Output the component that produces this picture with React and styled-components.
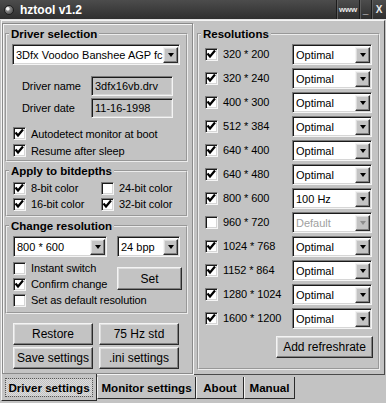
import React from 'react';
import styled, { createGlobalStyle } from 'styled-components';

const FONT = '"Liberation Sans", Arial, Helvetica, sans-serif';

const GlobalStyle = createGlobalStyle`
  html, body {
    margin: 0;
    padding: 0;
    background: #c3c3c3;
    font-family: ${FONT};
  }
`;

const RESOLUTIONS = [
  { label: '320 * 200', on: true, rate: 'Optimal' },
  { label: '320 * 240', on: true, rate: 'Optimal' },
  { label: '400 * 300', on: true, rate: 'Optimal' },
  { label: '512 * 384', on: true, rate: 'Optimal' },
  { label: '640 * 400', on: true, rate: 'Optimal' },
  { label: '640 * 480', on: true, rate: 'Optimal' },
  { label: '800 * 600', on: true, rate: '100 Hz' },
  { label: '960 * 720', on: false, rate: 'Default', disabled: true },
  { label: '1024 * 768', on: true, rate: 'Optimal' },
  { label: '1152 * 864', on: true, rate: 'Optimal' },
  { label: '1280 * 1024', on: true, rate: 'Optimal' },
  { label: '1600 * 1200', on: true, rate: 'Optimal' },
];

const TABS = [
  { label: 'Driver settings', active: true, w: 96 },
  { label: 'Monitor settings', w: 99 },
  { label: 'About', w: 48 },
  { label: 'Manual', w: 51 },
];

export default function App() {
  return (
    <>
      <GlobalStyle />
      <Window>
        <TitleBar>
          <AppIcon />
          <Title>hztool v1.2</Title>
          <TitleButtons>
            <TitleButton $w={23} $small>www</TitleButton>
            <TitleButton $w={12}>_</TitleButton>
            <TitleButton $w={15}>X</TitleButton>
          </TitleButtons>
        </TitleBar>

        <TabPage>
          <LeftPane>
            <Group>
              <Legend>Driver selection</Legend>
              <Combo value="3Dfx Voodoo Banshee AGP fc" width={168} />
              <FieldRow $top={11}>
                <FieldLabel>Driver name</FieldLabel>
                <TextBox>3dfx16vb.drv</TextBox>
              </FieldRow>
              <FieldRow $top={2}>
                <FieldLabel>Driver date</FieldLabel>
                <TextBox>11-16-1998</TextBox>
              </FieldRow>
              <CheckList>
                <Check checked label="Autodetect monitor at boot" />
                <Check checked label="Resume after sleep" />
              </CheckList>
            </Group>

            <Group $bottom={3}>
              <Legend>Apply to bitdepths</Legend>
              <DepthGrid>
                <Check checked label="8-bit color" h={16} />
                <Check label="24-bit color" h={16} />
                <Check checked label="16-bit color" h={16} />
                <Check checked label="32-bit color" h={16} />
              </DepthGrid>
            </Group>

            <Group $bottom={4}>
              <Legend>Change resolution</Legend>
              <ComboRow>
                <Combo value="800 * 600" width={94} />
                <Combo value="24 bpp" width={63} />
              </ComboRow>
              <ModeGrid>
                <Check label="Instant switch" h={16} />
                <SetButton>Set</SetButton>
                <Check checked label="Confirm change" h={16} />
                <WideCell>
                  <Check label="Set as default resolution" h={16} />
                </WideCell>
              </ModeGrid>
            </Group>

            <ButtonGrid>
              <Button>Restore</Button>
              <Button>75 Hz std</Button>
              <Button>Save settings</Button>
              <Button>.ini settings</Button>
            </ButtonGrid>
          </LeftPane>

          <ResGroup>
            <Legend>Resolutions</Legend>
            {RESOLUTIONS.map((r) => (
              <ResRow key={r.label}>
                <Check checked={r.on} label={r.label} h={24} />
                <Combo value={r.rate} width={80} disabled={r.disabled} />
              </ResRow>
            ))}
            <RefreshButton>Add refreshrate</RefreshButton>
          </ResGroup>
        </TabPage>

        <TabBar>
          {TABS.map((t) => (
            <Tab key={t.label} $active={t.active} $w={t.w}>
              <TabText $active={t.active}>{t.label}</TabText>
            </Tab>
          ))}
        </TabBar>
      </Window>
    </>
  );
}

function Check({ checked, label, h = 17 }) {
  return (
    <CheckRow $h={h}>
      <CheckBox>
        {checked && (
          <svg width="11" height="11" viewBox="0 0 11 11">
            <polyline points="1.5,4.5 4,7.5 9,1.5" fill="none" stroke="#000" strokeWidth="2.2" />
          </svg>
        )}
      </CheckBox>
      <CheckLabel>{label}</CheckLabel>
    </CheckRow>
  );
}

function Combo({ value, width, disabled }) {
  return (
    <ComboBox $w={width}>
      <ComboText $disabled={disabled}>{value}</ComboText>
      <ComboArrow $disabled={disabled} />
    </ComboBox>
  );
}

const Window = styled.div`
  width: 386px;
  height: 403px;
  display: flex;
  flex-direction: column;
  background: #c3c3c3;
  overflow: hidden;
`;

const TitleBar = styled.div`
  height: 19px;
  border-bottom: 1px solid #e4e4e4;
  background: linear-gradient(#4c4c4c, #2f2f2f);
  display: flex;
  align-items: center;
  padding-left: 4px;
`;

const AppIcon = styled.div`
  width: 10px;
  height: 10px;
  border-radius: 50%;
  background: radial-gradient(circle at 35% 35%, #f4f4f4 0 18%, #8a8a8a 30%, #5a5a5a 70%);
  border: 1px solid #1e1e1e;
  box-sizing: border-box;
`;

const Title = styled.div`
  margin-left: 6px;
  color: #fff;
  font-weight: bold;
  font-size: 12px;
  flex: 1;
`;

const TitleButtons = styled.div`
  display: flex;
  height: 19px;
`;

const TitleButton = styled.div`
  width: ${(p) => p.$w}px;
  box-sizing: border-box;
  border-left: 1px solid #1c1c1c;
  box-shadow: inset 1px 0 0 #5e5e5e;
  color: #e8e8e8;
  font-weight: bold;
  font-size: ${(p) => (p.$small ? '8px' : '10px')};
  letter-spacing: ${(p) => (p.$small ? '-0.3px' : '0')};
  display: flex;
  align-items: center;
  justify-content: center;
`;

const TabPage = styled.div`
  margin: 0 1px;
  height: 355px;
  box-sizing: border-box;
  border: 1px solid;
  border-color: #f4f4f4 #4a4a4a #4a4a4a #f4f4f4;
  padding: 2px 4px 1px 0;
  display: flex;
  align-items: flex-start;
`;

const LeftPane = styled.div`
  width: 191px;
  height: 351px;
  box-sizing: border-box;
  border: 1px solid #8a8a8a;
  box-shadow: inset 1px 1px 0 #f4f4f4, 1px 1px 0 #f4f4f4;
  padding: 3px 4px 0 2px;
  display: flex;
  flex-direction: column;
  gap: 2px;
`;

const Group = styled.fieldset`
  margin: 0;
  min-width: 0;
  padding: 3px 5px ${(p) => p.$bottom ?? 1}px 5px;
  border: 2px groove #ececec;
  display: flex;
  flex-direction: column;
`;

const ResGroup = styled(Group)`
  width: 183px;
  box-sizing: border-box;
  margin: 4px 0 0 4px;
  padding: 1px 5px 10px 5px;
`;

const Legend = styled.legend`
  padding: 0 2px;
  margin-left: -3px;
  font-size: 11.5px;
  font-weight: bold;
  line-height: 14px;
  color: #000;
`;

const FieldRow = styled.div`
  margin-top: ${(p) => p.$top}px;
  display: flex;
  align-items: center;
  height: 20px;
`;

const FieldLabel = styled.div`
  width: 69px;
  padding-left: 10px;
  font-size: 11px;
  letter-spacing: -0.1px;
`;

const sunken = `
  box-sizing: border-box;
  border: 1px solid;
  border-color: #7a7a7a #f4f4f4 #f4f4f4 #7a7a7a;
  box-shadow: inset 1px 1px 0 #1a1a1a, inset -1px -1px 0 #d6d6d6;
`;

const raised = `
  box-sizing: border-box;
  border: 1px solid;
  border-color: #f4f4f4 #2a2a2a #2a2a2a #f4f4f4;
  box-shadow: inset -1px -1px 0 #808080, inset 1px 1px 0 #dedede;
`;

const TextBox = styled.div`
  ${sunken}
  width: 82px;
  height: 20px;
  background: #c3c3c3;
  font-size: 11px;
  line-height: 18px;
  padding-left: 3px;
`;

const CheckList = styled.div`
  margin-top: 7px;
  display: flex;
  flex-direction: column;
`;

const CheckRow = styled.div`
  height: ${(p) => p.$h}px;
  display: flex;
  align-items: center;
  gap: 5px;
  padding-left: 1px;
  min-width: 0;
`;

const CheckBox = styled.div`
  ${sunken}
  width: 13px;
  height: 13px;
  flex: none;
  background: #fff;
  display: flex;
  align-items: center;
  justify-content: center;
`;

const CheckLabel = styled.div`
  font-size: 11px;
  letter-spacing: -0.1px;
  white-space: nowrap;
  color: #000;
`;

const DepthGrid = styled.div`
  margin-top: -1px;
  display: grid;
  grid-template-columns: 88px 1fr;
`;

const ComboRow = styled.div`
  display: flex;
  gap: 10px;
  padding-left: 1px;
`;

const ComboBox = styled.div`
  ${sunken}
  width: ${(p) => p.$w}px;
  height: 21px;
  flex: none;
  background: #fff;
  display: flex;
  align-items: stretch;
  padding: 2px 1px 1px 2px;
`;

const ComboText = styled.div`
  flex: 1;
  min-width: 0;
  overflow: hidden;
  white-space: nowrap;
  font-size: 11px;
  line-height: 16px;
  padding-left: 1px;
  color: ${(p) => (p.$disabled ? '#a0a0a0' : '#000')};
`;

const ComboArrow = styled.div`
  ${raised}
  width: 15px;
  flex: none;
  background: #c3c3c3;
  display: flex;
  align-items: center;
  justify-content: center;

  &::after {
    content: '';
    border-left: 3.5px solid transparent;
    border-right: 3.5px solid transparent;
    border-top: 4px solid ${(p) => (p.$disabled ? '#8e8e8e' : '#000')};
  }
`;

const ModeGrid = styled.div`
  margin-top: 3px;
  display: grid;
  grid-template-columns: 1fr 65px;
  grid-template-rows: 16px 16px 16px;
`;

const WideCell = styled.div`
  grid-column: 1 / -1;
`;

const Button = styled.div`
  ${raised}
  height: 22px;
  background: #c3c3c3;
  display: flex;
  align-items: center;
  justify-content: center;
  font-size: 12px;
  color: #000;
  white-space: nowrap;
`;

const SetButton = styled(Button)`
  grid-column: 2;
  grid-row: 1 / 3;
  width: 65px;
  height: 23px;
  margin: 7px -1px 0 0;
  justify-self: end;
`;

const ButtonGrid = styled.div`
  margin: 7px 0 0 8px;
  display: grid;
  grid-template-columns: 80px 80px;
  column-gap: 6px;
  row-gap: 2px;
`;

const ResRow = styled.div`
  height: 24px;
  display: flex;
  align-items: center;
  justify-content: space-between;
  padding-right: 1px;
`;

const RefreshButton = styled(Button)`
  align-self: flex-end;
  width: 97px;
  margin: 6px 0 0 0;
`;

const TabBar = styled.div`
  display: flex;
  align-items: flex-start;
  padding-left: 1px;
`;

const Tab = styled.div`
  box-sizing: border-box;
  width: ${(p) => p.$w}px;
  margin-top: ${(p) => (p.$active ? '-1px' : '2px')};
  height: ${(p) => (p.$active ? '27px' : '22px')};
  padding-top: ${(p) => (p.$active ? '5px' : '2px')};
  display: flex;
  justify-content: center;
  align-items: flex-start;
  border: 1px solid;
  border-top: none;
  border-color: #f4f4f4 #2a2a2a #2a2a2a #f4f4f4;
  background: #c3c3c3;
  position: relative;
  z-index: ${(p) => (p.$active ? 1 : 0)};
`;

const TabText = styled.div`
  font-size: 11.6px;
  font-weight: bold;
  line-height: 17px;
  padding: 0 2px;
  white-space: nowrap;
  color: #000;
  ${(p) => p.$active && `
    outline: 1px dotted #555;
    background: repeating-conic-gradient(#c3c3c3 0 25%, #dcdcdc 0 50%) 0 0 / 2px 2px;
  `}
`;
